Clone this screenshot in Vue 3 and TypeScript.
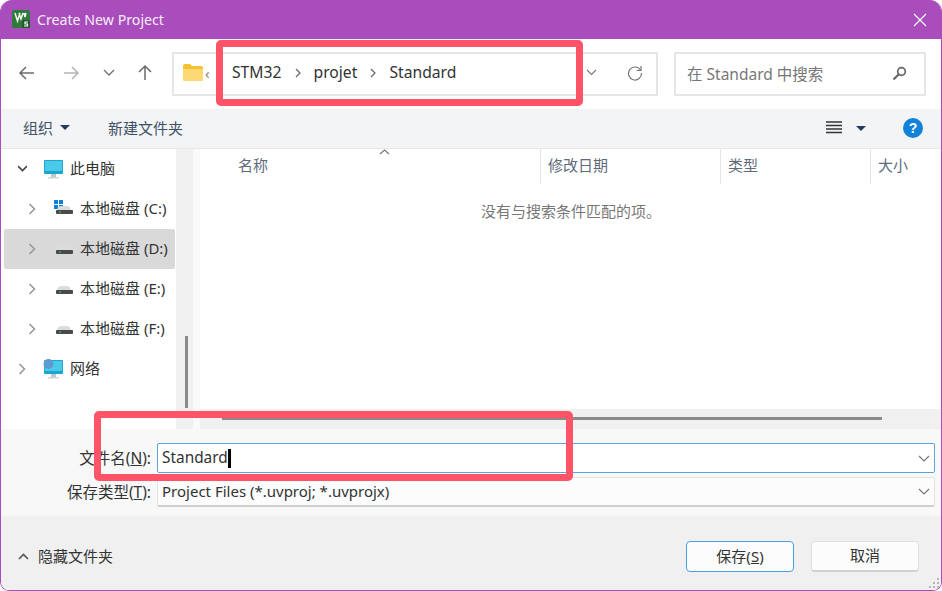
<template>
  <div class="dialog">
    <header class="titlebar">
      <svg class="app-icon" width="18" height="18" viewBox="0 0 18 18">
        <rect width="18" height="18" rx="2" fill="#2f7a3c" />
        <path d="M3 3l2.500 8L8 3M7 3l2 6 2-6M12 3l1 4 1-4" fill="none" stroke="#f2f6ee" stroke-width="1.500" />
        <rect x="10" y="10" width="8" height="8" rx="1" fill="#1e5a2c" />
        <path d="M16 12h-3v2h2.500v2H12" fill="none" stroke="#fff" stroke-width="1.200" />
      </svg>
      <span class="title">Create New Project</span>
      <svg class="close" width="14" height="14" viewBox="0 0 14 14">
        <path d="M1 1l12 12M13 1L1 13" stroke="#fff" stroke-width="1.100" />
      </svg>
    </header>

    <div class="nav">
      <div class="nav-buttons">
        <svg width="18" height="16" viewBox="0 0 18 16"><path d="M16 8H2M8 2L2 8l6 6" fill="none" stroke="#6b6b6b" stroke-width="1.500" /></svg>
        <svg width="18" height="16" viewBox="0 0 18 16"><path d="M2 8h14M10 2l6 6-6 6" fill="none" stroke="#b4b4b4" stroke-width="1.500" /></svg>
        <svg width="12" height="8" viewBox="0 0 12 8"><path d="M1 1l5 5 5-5" fill="none" stroke="#707070" stroke-width="1.300" /></svg>
        <svg width="16" height="18" viewBox="0 0 16 18"><path d="M8 16V2M2 8l6-6 6 6" fill="none" stroke="#6b6b6b" stroke-width="1.500" /></svg>
      </div>
      <div class="address">
        <svg class="folder" width="20" height="17" viewBox="0 0 20 17">
          <path d="M0 2q0-2 2-2h5l2 2h9q2 0 2 2v11q0 2-2 2H2q-2 0-2-2z" fill="#f4c22f" />
          <path d="M0 5h20v10q0 2-2 2H2q-2 0-2-2z" fill="#fcd975" />
        </svg>
        <span class="crumb-more">‹</span>
        <span class="crumb first">STM32</span>
        <svg class="sep" width="6" height="10" viewBox="0 0 6 10"><path d="M1 1l4 4-4 4" fill="none" stroke="#666" stroke-width="1.200" /></svg>
        <span class="crumb">projet</span>
        <svg class="sep" width="6" height="10" viewBox="0 0 6 10"><path d="M1 1l4 4-4 4" fill="none" stroke="#666" stroke-width="1.200" /></svg>
        <span class="crumb">Standard</span>
        <svg class="addr-down" width="11" height="7" viewBox="0 0 11 7"><path d="M1 1l4.500 4.500L10 1" fill="none" stroke="#777" stroke-width="1.100" /></svg>
        <svg class="refresh" width="16" height="16" viewBox="0 0 16 16">
          <path d="M13.500 5A6.500 6.500 0 1 0 14.500 8" fill="none" stroke="#777" stroke-width="1.200" />
          <path d="M14 1v4.500H9.500" fill="none" stroke="#777" stroke-width="1.200" />
        </svg>
      </div>
      <div class="search">
        <span class="search-text">在 Standard 中搜索</span>
        <svg width="15" height="15" viewBox="0 0 15 15">
          <circle cx="9.500" cy="5.500" r="3.800" fill="none" stroke="#666" stroke-width="1.700" />
          <path d="M6.500 8.500L1.500 13.500" stroke="#666" stroke-width="2.200" />
        </svg>
      </div>
    </div>

    <div class="toolbar">
      <span class="tool">组织</span>
      <i class="caret"></i>
      <span class="tool new-folder">新建文件夹</span>
      <div class="spacer"></div>
      <svg class="view-icon" width="16" height="13" viewBox="0 0 16 13"><path d="M0 1h16M0 4.500h16M0 8h16M0 11.500h16" stroke="#333" stroke-width="1.300" /></svg>
      <i class="caret view-caret"></i>
      <svg class="help" width="20" height="20" viewBox="0 0 20 20">
        <circle cx="10" cy="10" r="10" fill="#1182d8" />
        <text x="10" y="15" text-anchor="middle" font-size="14" font-weight="700" fill="#fff" font-family="Liberation Sans, sans-serif">?</text>
      </svg>
    </div>

    <div class="browser">
      <aside class="tree">
        <div v-for="row in treeRows" :key="row.label" class="tree-row" :class="{ selected: row.selected, nested: row.nested }">
          <svg width="9" height="12" viewBox="0 0 9 12">
            <path v-if="row.open" d="M0 3l4.500 4.500L9 3" fill="none" stroke="#444" stroke-width="1.600" />
            <path v-else d="M1.500 1l5 5-5 5" fill="none" stroke="#999" stroke-width="1.600" />
          </svg>
          <svg v-if="row.kind === 'drive'" class="row-icon" width="20" height="18" viewBox="0 0 20 18">
            <g v-if="row.system" fill="#0f7fdc">
              <rect x="0" y="0" width="4" height="4" /><rect x="5" y="0" width="4" height="4" />
              <rect x="0" y="5" width="4" height="4" /><rect x="5" y="5" width="4" height="4" />
            </g>
            <path d="M3 10q1-4 4-4h6q3 0 4 4z" fill="#dcdcdc" />
            <rect x="2" y="10" width="17" height="4" rx="1" fill="#4a4a4a" />
            <rect x="5" y="11.500" width="2" height="1.200" fill="#35c24a" />
          </svg>
          <svg v-else class="row-icon wide" width="20" height="20" viewBox="0 0 20 20">
            <rect x="1" y="1" width="19" height="14" rx="1" fill="#1ba6d2" />
            <rect x="2" y="2" width="17" height="10" fill="#4cc8e8" />
            <rect x="8" y="15" width="5" height="3" fill="#b7c8d0" />
            <rect x="5" y="18" width="11" height="1.500" fill="#cfd8dc" />
            <circle v-if="row.kind === 'net'" cx="5.500" cy="5" r="5" fill="#5c9bd0" />
          </svg>
          <span class="row-label">{{ row.label }}</span>
        </div>
      </aside>
      <div class="tree-scroll"><div class="tree-thumb"></div></div>
      <div class="gutter"></div>
      <section class="list">
        <div class="list-head">
          <svg class="sort" width="11" height="6" viewBox="0 0 11 6"><path d="M1 5l4.500-4L10 5" fill="none" stroke="#777" stroke-width="1.200" /></svg>
          <div class="col col-name">名称</div>
          <div class="col col-date">修改日期</div>
          <div class="col col-type">类型</div>
          <div class="col col-size">大小</div>
        </div>
        <div class="empty">没有与搜索条件匹配的项。</div>
        <div class="list-scroll"><div class="list-thumb"></div></div>
      </section>
    </div>

    <div class="form">
      <div class="form-row">
        <label>文件名(<u>N</u>):</label>
        <div class="field focused">
          <span>Standard</span><i class="cursor"></i>
          <svg class="drop" width="12" height="7" viewBox="0 0 12 7"><path d="M1 1l5 5 5-5" fill="none" stroke="#777" stroke-width="1.200" /></svg>
        </div>
      </div>
      <div class="form-row">
        <label>保存类型(<u>T</u>):</label>
        <div class="field plain">
          <span>Project Files (*.uvproj; *.uvprojx)</span>
          <svg class="drop" width="12" height="7" viewBox="0 0 12 7"><path d="M1 1l5 5 5-5" fill="none" stroke="#777" stroke-width="1.200" /></svg>
        </div>
      </div>
    </div>

    <footer class="footer">
      <svg width="11" height="7" viewBox="0 0 11 7"><path d="M1 6l4.500-4.500L10 6" fill="none" stroke="#555" stroke-width="1.600" /></svg>
      <span class="hide">隐藏文件夹</span>
      <div class="spacer"></div>
      <button class="btn primary">保存(<u>S</u>)</button>
      <button class="btn">取消</button>
      <svg class="grip" width="12" height="12" viewBox="0 0 12 12" fill="#b5b5b5">
        <rect x="9" y="1" width="2" height="2" /><rect x="5" y="5" width="2" height="2" /><rect x="9" y="5" width="2" height="2" />
        <rect x="1" y="9" width="2" height="2" /><rect x="5" y="9" width="2" height="2" /><rect x="9" y="9" width="2" height="2" />
      </svg>
    </footer>

    <div class="mark mark-path"></div>
    <div class="mark mark-name"></div>
  </div>
</template>

<script setup lang="ts">
interface TreeRow {
  label: string
  kind: 'pc' | 'drive' | 'net'
  open?: boolean
  nested?: boolean
  selected?: boolean
  system?: boolean
}

const treeRows: TreeRow[] = [
  { label: '此电脑', kind: 'pc', open: true },
  { label: '本地磁盘 (C:)', kind: 'drive', nested: true, system: true },
  { label: '本地磁盘 (D:)', kind: 'drive', nested: true, selected: true },
  { label: '本地磁盘 (E:)', kind: 'drive', nested: true },
  { label: '本地磁盘 (F:)', kind: 'drive', nested: true },
  { label: '网络', kind: 'net' }
]
</script>

<style>
body {
  background: #fff;
  overflow: hidden;
}
</style>

<style scoped>
.dialog {
  position: relative;
  box-sizing: border-box;
  width: 942px;
  height: 591px;
  display: flex;
  flex-direction: column;
  border: solid #a94dbd;
  border-width: 0 1.500px 1.500px;
  border-radius: 12px 12px 9px 9px;
  overflow: hidden;
  background: #fff;
  font-family: "Noto Sans", "Noto Sans CJK SC", sans-serif;
  font-size: 15px;
  color: #3c3c3c;
}

.titlebar {
  height: 39px;
  flex: none;
  display: flex;
  align-items: center;
  padding: 0 14px 0 11px;
  background: #a94dbd;
  color: #fff;
}

.app-icon {
  margin-top: -1px;
}

.title {
  margin-left: 7px;
  font-size: 14.200px;
  color: #f6ecf8;
}

.close {
  margin-left: auto;
}

.nav {
  height: 70px;
  flex: none;
  box-sizing: border-box;
  display: flex;
  align-items: center;
  padding: 0 14px 0 17px;
}

.nav-buttons {
  width: 154px;
  display: flex;
  align-items: center;
  margin-bottom: 3px;
}

.nav-buttons svg:nth-child(2) {
  margin-left: 26px;
}

.nav-buttons svg:nth-child(3) {
  margin-left: 23px;
}

.nav-buttons svg:nth-child(4) {
  margin-left: 22px;
}

.address,
.search {
  box-sizing: border-box;
  height: 44px;
  display: flex;
  align-items: center;
  border: 2px solid #e6e6e6;
}

.address {
  width: 486px;
  padding-left: 9px;
}

.folder {
  flex: none;
  margin-bottom: 3px;
}

.crumb-more {
  margin-left: 2px;
  color: #888;
  width: 27px;
  margin-bottom: 3px;
}

.crumb {
  font-size: 15.700px;
  color: #333;
  margin-bottom: 4px;
}

.sep {
  margin: 0 13px 2px;
}

.addr-down {
  margin-left: auto;
  margin-bottom: 3px;
}

.refresh {
  margin-left: 30px;
  margin-right: 13px;
  margin-bottom: 3px;
}

.search {
  width: 252px;
  margin-left: 16px;
  padding: 0 17px 0 11px;
  justify-content: space-between;
}

.search-text {
  color: #777;
  font-size: 15.500px;
  margin-bottom: 2px;
}

.search svg {
  margin-bottom: 2px;
}

.toolbar {
  height: 40px;
  flex: none;
  box-sizing: border-box;
  display: flex;
  align-items: center;
  padding-left: 22px;
  padding-right: 18px;
  padding-bottom: 2px;
  background: #f3f4f6;
  border-bottom: 1px solid #e8e8e8;
}

.tool {
  font-size: 15px;
  color: #3f5166;
}

.caret {
  width: 0;
  height: 0;
  margin-left: 7px;
  border: 5px solid transparent;
  border-top: 5px solid #243a5e;
  border-bottom: 0;
}

.new-folder {
  margin-left: 38px;
}

.spacer {
  flex: 1;
}

.view-icon {
  margin-right: 14px;
}

.view-caret {
  margin-left: 0;
  margin-right: 37px;
  margin-top: 1px;
}

.browser {
  height: 280px;
  flex: none;
  display: flex;
}

.tree {
  width: 175px;
  flex: none;
  box-sizing: border-box;
  padding: 0 1px 0 3px;
}

.tree-row {
  height: 40px;
  box-sizing: border-box;
  display: flex;
  align-items: center;
  padding-left: 14px;
  border-radius: 2px;
  white-space: nowrap;
  color: #333;
}

.tree-row.nested {
  padding-left: 24px;
}

.tree-row.selected {
  background: #d9d9d9;
}

.row-label {
  margin-bottom: 3px;
}

.row-icon {
  margin-left: 17px;
  margin-right: 6px;
}

.row-icon.wide {
  margin-left: 16px;
  margin-right: 7px;
}

.tree-scroll {
  width: 17px;
  flex: none;
  display: flex;
  justify-content: center;
  padding-left: 3px;
  box-sizing: border-box;
  background: #f0f0f0;
}

.tree-thumb {
  width: 3px;
  height: 72px;
  margin-top: 187px;
  background: #8a8a8a;
}

.gutter {
  width: 7px;
  flex: none;
  background: #fafafa;
}

.list {
  flex: 1;
  position: relative;
  display: flex;
  flex-direction: column;
}

.list-head {
  position: relative;
  height: 35px;
  flex: none;
  display: flex;
  color: #5d6b7a;
}

.sort {
  position: absolute;
  left: 179px;
  top: 0;
}

.col {
  box-sizing: border-box;
  padding: 5px 0 0 7px;
  border-right: 1px solid #e5e5e5;
}

.col-name {
  width: 341px;
  padding-left: 38px;
}

.col-date {
  width: 180px;
}

.col-type {
  width: 150px;
}

.col-size {
  border-right: 0;
  flex: 1;
}

.empty {
  flex: 1;
  padding-top: 16px;
  padding-left: 281px;
  font-size: 15px;
  color: #777;
}

.list-scroll {
  height: 20px;
  flex: none;
  background: #f0f0f0;
  padding: 8px 0 0 22px;
  box-sizing: border-box;
}

.list-thumb {
  width: 660px;
  height: 3px;
  background: #8a8a8a;
}

.form {
  height: 87px;
  flex: none;
  box-sizing: border-box;
  padding: 14px 6px 0 0;
  display: flex;
  flex-direction: column;
  gap: 4px;
  background: #f8f8f8;
}

.form-row {
  display: flex;
  align-items: center;
  height: 30px;
}

.form-row label {
  width: 150px;
  margin-right: 6px;
  margin-bottom: 2px;
  font-size: 15.500px;
  text-align: right;
  color: #333;
}

.field {
  flex: 1;
  height: 30px;
  box-sizing: border-box;
  display: flex;
  align-items: center;
  padding-left: 4px;
  border-radius: 2px;
  color: #333;
}

.field span {
  margin-bottom: 2px;
}

.field.focused {
  background: #fff;
  border: 1.500px solid #5aa5dc;
}

.field.focused span {
  font-size: 15.400px;
}

.field.plain {
  background: #fcfcfc;
  border: 1px solid #e2e2e2;
  border-bottom: 2px solid #cfcfcf;
}

.cursor {
  width: 3.500px;
  height: 19px;
  margin-left: 0;
  background: #000;
}

.drop {
  margin-left: auto;
  margin-right: 4px;
}

.footer {
  position: relative;
  flex: 1;
  display: flex;
  align-items: center;
  padding: 6px 22px 0 17px;
  background: #f0f0f0;
}

.hide {
  margin-left: 9px;
  margin-bottom: 2px;
  color: #333;
}

.btn {
  box-sizing: border-box;
  width: 108px;
  height: 31px;
  padding: 0 0 2px;
  margin-left: 17px;
  border: 1px solid #e0e0e0;
  border-bottom: 2px solid #d0d0d0;
  border-radius: 4px;
  background: #fcfcfc;
  font: inherit;
  color: #333;
}

.btn.primary {
  border: 1.500px solid #4a9fdf;
}

.grip {
  position: absolute;
  right: 1px;
  bottom: 1px;
}

.mark {
  position: absolute;
  box-sizing: border-box;
  border: 7px solid #ff5468;
  border-radius: 5px;
  pointer-events: none;
}

.mark-path {
  left: 214.500px;
  top: 40px;
  width: 367px;
  height: 66px;
}

.mark-name {
  left: 92.500px;
  top: 411px;
  width: 479px;
  height: 70px;
}
</style>
